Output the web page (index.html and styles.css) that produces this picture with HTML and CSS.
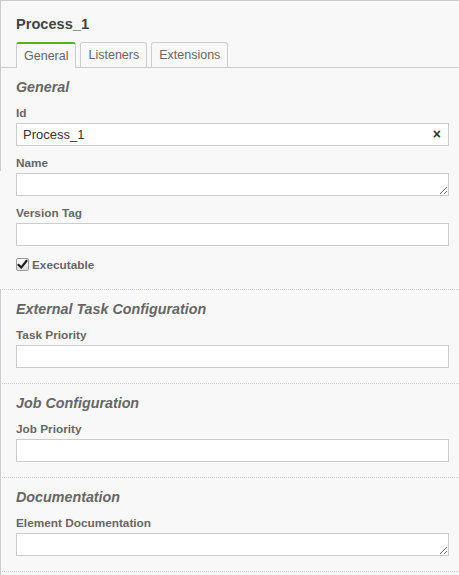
FILE: index.html
```html
<!DOCTYPE html>
<html>
<head>
<meta charset="utf-8">
<link rel="stylesheet" href="styles.css">
</head>
<body>
<div class="panel">
  <div class="header">Process_1</div>
  <div class="tabs">
    <div class="tab active">General</div>
    <div class="tab">Listeners</div>
    <div class="tab">Extensions</div>
  </div>

  <div class="group first">
    <div class="group-title">General</div>
    <div class="field">
      <label class="label">Id</label>
      <div class="input-wrap">
        <input class="input" type="text" value="Process_1">
        <span class="clear">×</span>
      </div>
    </div>
    <div class="field">
      <label class="label">Name</label>
      <textarea class="input textarea"></textarea>
    </div>
    <div class="field">
      <label class="label">Version Tag</label>
      <input class="input" type="text" value="">
    </div>
    <div class="check-row">
      <span class="checkbox"><svg width="11" height="11" viewBox="0 0 11 11"><path d="M1.5 5.8 L4.2 8.6 L9.6 1.8" fill="none" stroke="#222" stroke-width="2.2" stroke-linejoin="round" stroke-linecap="round"/></svg></span>
      <span class="check-label">Executable</span>
    </div>
  </div>

  <div class="group">
    <div class="group-title">External Task Configuration</div>
    <div class="field">
      <label class="label">Task Priority</label>
      <input class="input" type="text" value="">
    </div>
  </div>

  <div class="group">
    <div class="group-title">Job Configuration</div>
    <div class="field">
      <label class="label">Job Priority</label>
      <input class="input" type="text" value="">
    </div>
  </div>

  <div class="group">
    <div class="group-title">Documentation</div>
    <div class="field">
      <label class="label">Element Documentation</label>
      <textarea class="input textarea"></textarea>
    </div>
  </div>
  <div class="group last"></div>
</div>
</body>
</html>
```

FILE: styles.css
```css
html, body {
  margin: 0;
  padding: 0;
}
body {
  font-family: "Liberation Sans", Arial, sans-serif;
  background: #f8f8f8;
}
.panel {
  min-height: 574px;
  border-top: 1px solid #ccc;
  background:
    linear-gradient(#ccc, #ccc) 0 0 / 1px 170px no-repeat,
    linear-gradient(#ccc, #ccc) 0 288px / 1px 400px no-repeat,
    #f8f8f8;
  color: #666;
}
.header {
  padding: 13px 16px 0 16px;
  font-size: 14.6px;
  line-height: 20px;
  font-weight: bold;
  color: #444;
}
.tabs {
  display: flex;
  margin-top: 8px;
  padding-left: 16px;
  border-bottom: 1px solid #ccc;
  height: 25px;
}
.tab {
  box-sizing: border-box;
  height: 25px;
  padding: 1px 7px 0 7px;
  margin-right: 4px;
  border: 1px solid #ccc;
  border-bottom: none;
  border-radius: 3px 3px 0 0;
  font-size: 12.5px;
  line-height: 23px;
  color: #666;
  background: #f8f8f8;
}
.tab.active {
  border-top: 2px solid #52b415;
  line-height: 22px;
  height: 26px;
  margin-bottom: -1px;
}
.group {
  padding: 9px 10px 15px 16px;
  border-top: 1px dotted #ccc;
}
.group.first {
  border-top: none;
}
.group.last {
  padding: 0;
}
.group-title {
  font-size: 14.3px;
  line-height: 20px;
  font-weight: bold;
  font-style: italic;
  color: #666;
  margin-bottom: 9px;
}
.field + .field {
  margin-top: 10px;
}
.label {
  display: block;
  font-size: 11.8px;
  line-height: 14px;
  font-weight: bold;
  color: #666;
  margin-bottom: 3px;
}
.input-wrap {
  position: relative;
}
.input {
  display: block;
  box-sizing: border-box;
  width: 100%;
  height: 23px;
  margin: 0;
  padding: 0 6px;
  border: 1px solid #ccc;
  border-radius: 0;
  background: #fff;
  font-family: "Liberation Sans", Arial, sans-serif;
  font-size: 13px;
  color: #333;
  outline: none;
}
.textarea {
  padding: 3px 6px;
  resize: vertical;
  min-height: 23px;
}
.clear {
  position: absolute;
  right: 8px;
  top: 3px;
  font-size: 14px;
  line-height: 16px;
  font-weight: bold;
  color: #333;
}
.check-row {
  display: flex;
  align-items: center;
  height: 17px;
  margin-top: 10px;
  margin-bottom: 1px;
}
.checkbox {
  box-sizing: border-box;
  width: 13px;
  height: 13px;
  border: 1px solid #999;
  border-radius: 2px;
  background: linear-gradient(#fff, #ddd);
  display: flex;
  align-items: center;
  justify-content: center;
}
.checkbox svg {
  display: block;
}
.check-label {
  margin-left: 3px;
  font-size: 11.8px;
  font-weight: bold;
  color: #666;
}
```
